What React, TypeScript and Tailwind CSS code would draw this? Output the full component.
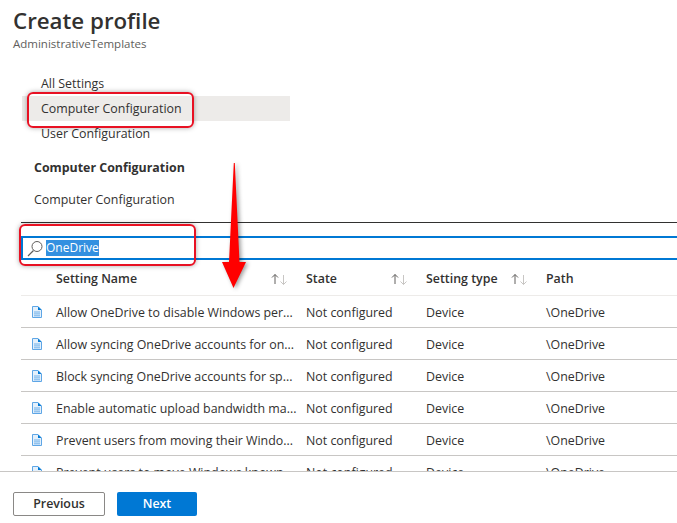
import React from 'react';

const rows = [
  'Allow OneDrive to disable Windows per...',
  'Allow syncing OneDrive accounts for on...',
  'Block syncing OneDrive accounts for sp...',
  'Enable automatic upload bandwidth ma...',
  'Prevent users from moving their Windo...',
  'Prevent users to move Windows known...',
];

function SortIcon() {
  return (
    <svg width="17" height="13" viewBox="0 0 17 13" fill="none" className="shrink-0">
      <path d="M4 11V1.5M1 4.5l3-3 3 3" stroke="#605e5c" strokeWidth="1" />
      <path d="M12.5 2v9.5M9.5 8.5l3 3 3-3" stroke="#c8c6c4" strokeWidth="1" />
    </svg>
  );
}

function DocIcon() {
  return (
    <svg width="10" height="12" viewBox="0 0 10 12" fill="none">
      <path d="M.5.5h5.5l3.5 3.5v7.5h-9z" fill="#e4f0fb" stroke="#5ea6e6" strokeWidth="1" />
      <path d="M6 .5V4h3.5z" fill="#0078d4" />
      <path d="M2 6h6M2 7.9h6M2 9.8h6" stroke="#6fb0ea" strokeWidth="1" />
    </svg>
  );
}

function Header({ label, sort, width }: { label: string; sort?: boolean; width: string }) {
  return (
    <div className={`flex items-center justify-between ${width}`}>
      <span>{label}</span>
      {sort && <SortIcon />}
    </div>
  );
}

export default function App() {
  return (
    <div className="relative flex h-[523px] w-[677px] flex-col overflow-hidden bg-white font-['Open_Sans',sans-serif] text-[12.4px] text-[#323130]">
      <div className="flex-1 overflow-hidden">
        <div className="pl-[13px] pt-[5px]">
          <h1 className="text-[22.3px] font-semibold leading-[31px]">Create profile</h1>
          <p className="text-[11.5px] leading-[16px] text-[#605e5c]">AdministrativeTemplates</p>
        </div>

        <nav className="ml-[22px] mt-[19px] w-[268px] leading-[25px]">
          <div className="pl-[19px]">All Settings</div>
          <div className="bg-[#edebe9] pl-[19px]">Computer Configuration</div>
          <div className="pl-[19px]">User Configuration</div>
        </nav>

        <div className="ml-[34px] mt-[9px] font-bold leading-[25px]">Computer Configuration</div>
        <div className="ml-[34px] mt-[7px] leading-[25px]">Computer Configuration</div>

        <div className="ml-[21px] mt-[10px] h-px bg-[#323130]" />

        <div className="ml-[21px] mt-[13px] flex h-[24px] items-center gap-[3px] border-y-2 border-l-2 border-[#0078d4] pl-[4px]">
          <svg width="16" height="17" viewBox="0 0 16 17" fill="none" className="shrink-0">
            <circle cx="10" cy="6.5" r="5" stroke="#605e5c" strokeWidth="1" />
            <path d="M6.5 10.5L1 16" stroke="#605e5c" strokeWidth="1.2" />
          </svg>
          <span className="bg-[#3390e0] text-[12px] leading-[16px] text-white">OneDrive</span>
        </div>

        <div className="ml-[21px] mt-[2px] flex h-[34px] items-center border-b border-[#edebe9] pl-[35px] pt-[2px] font-semibold">
          <Header label="Setting Name" sort width="w-[232px] mr-[18px]" />
          <Header label="State" sort width="w-[102px] mr-[18px]" />
          <Header label="Setting type" sort width="w-[102px] mr-[18px]" />
          <Header label="Path" width="w-[100px]" />
        </div>

        {rows.map((name) => (
          <div key={name} className="ml-[21px] flex h-[32px] shrink-0 items-center border-b border-[#c8c6c4]">
            <div className="flex w-[35px] pl-[11px]">
              <DocIcon />
            </div>
            <div className="w-[250px] whitespace-nowrap pt-[4px]">{name}</div>
            <div className="w-[120px] pt-[4px]">Not configured</div>
            <div className="w-[120px] pt-[4px]">Device</div>
            <div className="pt-[4px]">\OneDrive</div>
          </div>
        ))}
      </div>

      <div className="flex h-[52px] shrink-0 items-start gap-3 border-t border-[#c8c6c4] bg-white pl-[13px] pt-[20px]">
        <button className="h-[24px] w-[92px] rounded-[2px] border border-[#8a8886] font-semibold">Previous</button>
        <button className="h-[24px] w-[80px] rounded-[2px] bg-[#0078d4] font-semibold text-white">Next</button>
      </div>

      {/* annotations drawn over the screenshot */}
      <div className="absolute left-[27px] top-[92px] h-[36px] w-[167px] rounded-[6px] border-2 border-[#e81123] shadow-[0_0_5px_rgba(0,0,0,0.35)]" />
      <div className="absolute left-[19px] top-[224px] h-[42px] w-[177px] rounded-[6px] border-2 border-[#e81123] shadow-[0_0_5px_rgba(0,0,0,0.35)]" />
      <svg width="40" height="135" viewBox="0 0 40 135" className="absolute left-[214px] top-[158px] drop-shadow-[2px_1px_2px_rgba(0,0,0,0.4)]">
        <path d="M19.8 5h1L25.5 104h6.5L19.5 130 8 104h7z" fill="#ff0000" />
      </svg>
    </div>
  );
}
